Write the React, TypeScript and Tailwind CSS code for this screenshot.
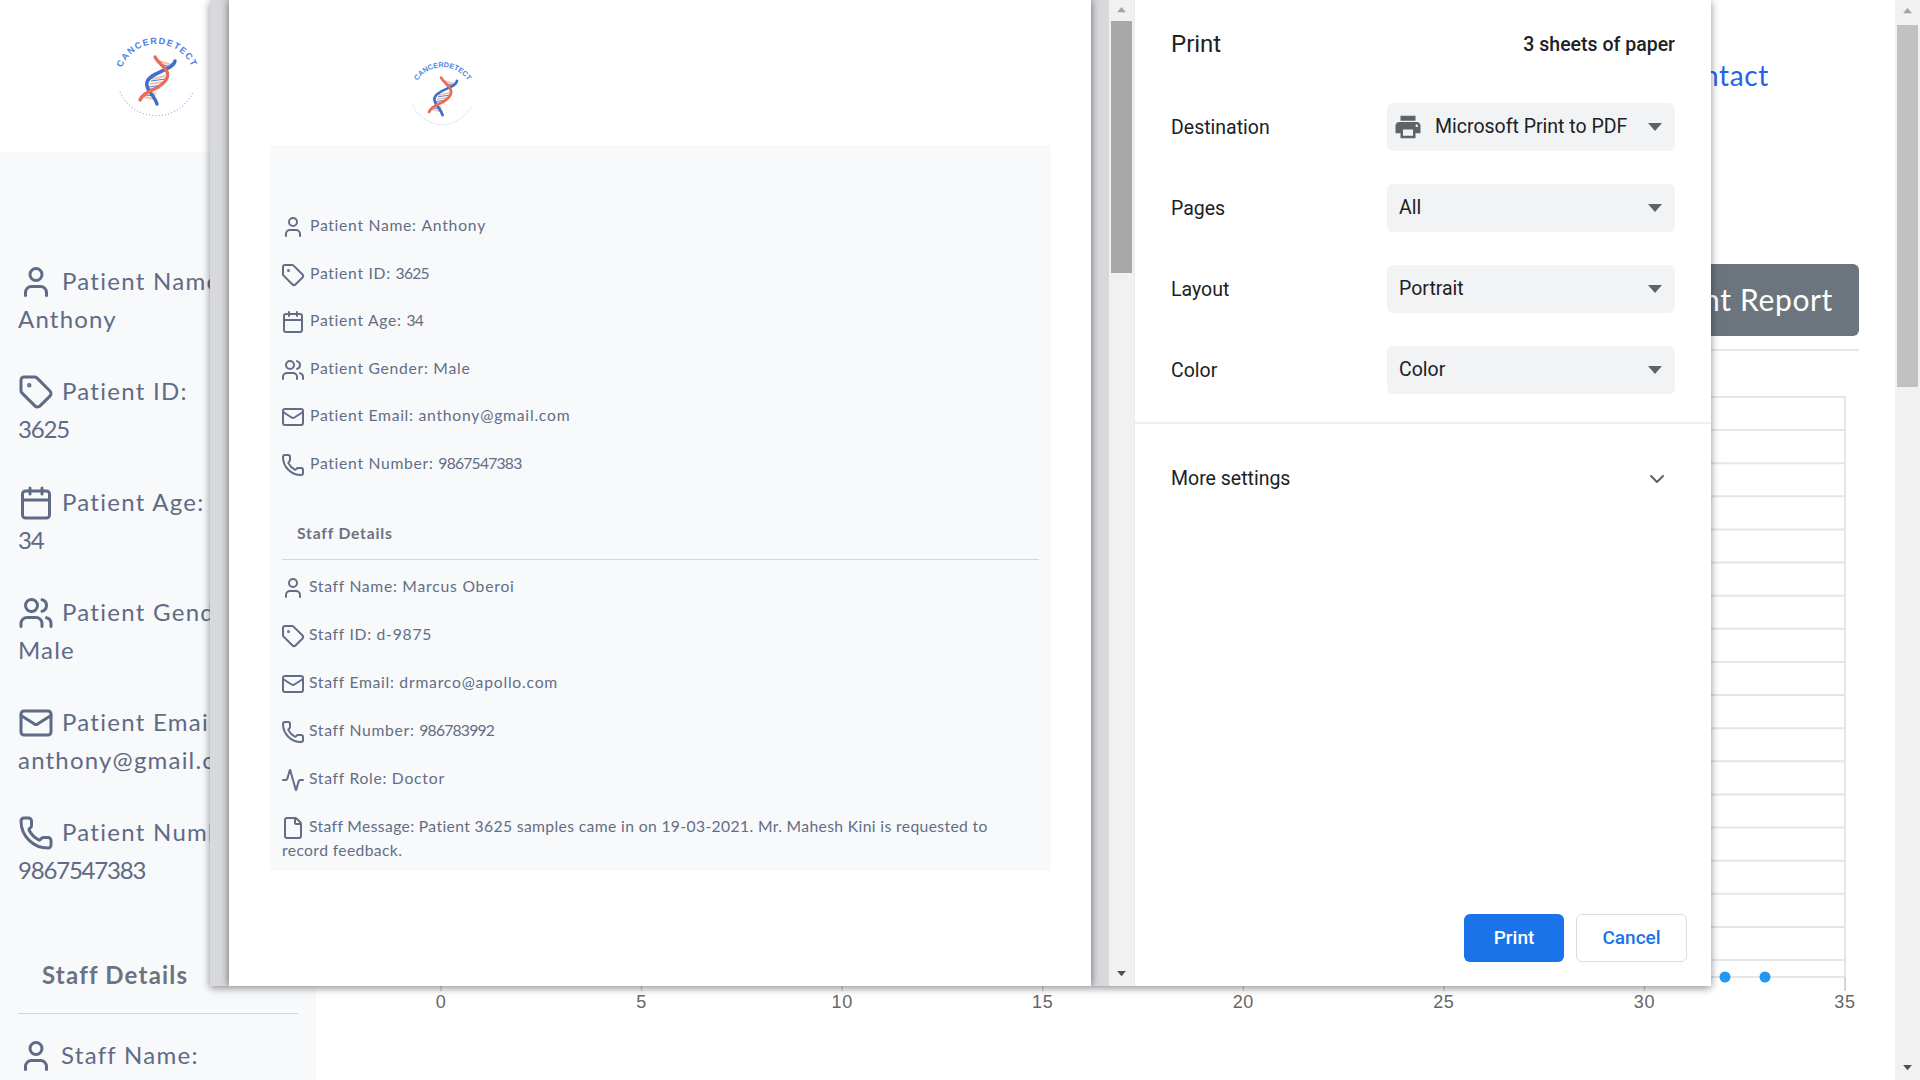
import React from 'react';
import { Activity, Calendar, ChevronDown, File, Mail, Phone, Tag, User, Users } from 'lucide-react';

const patientRows = [
  { icon: User, label: 'Patient Name:', value: 'Anthony' },
  { icon: Tag, label: 'Patient ID:', value: '3625' },
  { icon: Calendar, label: 'Patient Age:', value: '34' },
  { icon: Users, label: 'Patient Gender:', value: 'Male' },
  { icon: Mail, label: 'Patient Email:', value: 'anthony@gmail.com' },
  { icon: Phone, label: 'Patient Number:', value: '9867547383' },
];

const staffRows = [
  { icon: User, label: 'Staff Name:', value: 'Marcus Oberoi' },
  { icon: Tag, label: 'Staff ID:', value: 'd-9875' },
  { icon: Mail, label: 'Staff Email:', value: 'drmarco@apollo.com' },
  { icon: Phone, label: 'Staff Number:', value: '986783992' },
  { icon: Activity, label: 'Staff Role:', value: 'Doctor' },
];

const valueClass = (value: string) => (/^\d+$/.test(value) ? 'tracking-[-0.05em]' : 'tracking-[0.05em]');

const Logo: React.FC<{ id: string; className: string }> = ({ id, className }) => (
  <svg viewBox="0 0 120 110" className={className}>
    <defs>
      <path id={id} d="M 19 62 A 38 38 0 0 1 95 62" />
    </defs>
    <text fill="#4c7fe0" fontSize="9" fontWeight="700" fontFamily="'Liberation Sans',sans-serif">
      <textPath href={`#${id}`} startOffset="50%" textAnchor="middle">CANCERDETECT</textPath>
    </text>
    <path d="M 20 72 A 40 40 0 0 0 93 72" fill="none" stroke="#8fb0f0" strokeWidth="1.2" strokeDasharray="1 2.2" />
    <g stroke="#f2c3a8" strokeWidth="2">
      <path d="M59 41 L72 45 M62 46 L69 49 M52 59 L65 56 M50 64 L64 62 M50 69 L60 68 M44 77 L54 79 M47 72 L56 74" />
    </g>
    <g stroke="#4c7fe0" strokeWidth="1.2">
      <path d="M60 44 L71 47 M51 61 L65 59 M49 67 L62 65 M45 75 L55 76" />
    </g>
    <path d="M75 41 C74 50 50 52 47 62 C45 70 54 74 57 84" fill="none" stroke="#3b6fc9" strokeWidth="3.4" strokeLinecap="round" />
    <path d="M55 37 C60 46 72 50 66 60 C60 70 44 70 40 80" fill="none" stroke="#ea6a5b" strokeWidth="3.4" strokeLinecap="round" />
  </svg>
);

const ScrollArrow: React.FC<{ up?: boolean; className: string }> = ({ up, className }) => (
  <svg viewBox="0 0 12 8" className={className}>
    <path d={up ? 'M6 1 L11 7 L1 7 Z' : 'M6 7 L11 1 L1 1 Z'} fill="currentColor" />
  </svg>
);

const Caret = () => (
  <svg viewBox="0 0 14 8" className="w-[14px] h-[8px] shrink-0">
    <path d="M0 0 L14 0 L7 8 Z" fill="#5f6368" />
  </svg>
);

const Sidebar = () => (
  <aside className="w-[316px] shrink-0 font-['Lato',sans-serif] tracking-[0.08em]">
    <div className="h-[152px] bg-white pl-[100px] pt-[20px]">
      <Logo id="logo-arc-page" className="w-[120px] h-[110px]" />
    </div>
    <div className="bg-[#f8f9fb] h-[928px] px-[18px] pt-[110px] text-[24px] leading-[38px] text-[#5f6b85]">
      {patientRows.map((row) => (
        <div key={row.label} className="mb-[34.3px] whitespace-nowrap">
          <row.icon size={36} strokeWidth={2} className="inline-block align-middle mr-[8px] -mt-[4px]" />
          {row.label}
          <div className={valueClass(row.value)}>{row.value}</div>
        </div>
      ))}
      <div className="pl-[24px] pt-[32px] font-bold tracking-[0.05em] text-[#6b7280]">Staff Details</div>
      <div className="mt-[19px] mb-[22px] border-t border-[#d4d6da]" />
      <div className="whitespace-nowrap">
        <User size={36} strokeWidth={2} className="inline-block align-middle mr-[7px] -mt-[4px]" />
        Staff Name:
      </div>
    </div>
  </aside>
);

const Chart = () => {
  const gridLines = Array.from({ length: 18 }, (_, i) => 17 + i * 33.12);
  const ticks = [0, 5, 10, 15, 20, 25, 30, 35];
  return (
    <svg viewBox="0 0 1579 640" className="w-[1579px] h-[640px] mt-[29px] shrink-0">
      <g stroke="#e6e6e6" strokeWidth="2">
        {gridLines.map((y) => (
          <line key={y} x1="125" x2="1529" y1={y} y2={y} />
        ))}
        <line x1="125" x2="1529" y1="597" y2="597" />
        <line x1="1529" x2="1529" y1="16" y2="611" />
      </g>
      {ticks.map((t) => (
        <g key={t}>
          <line x1={125 + t * 40.115} x2={125 + t * 40.115} y1="597" y2="611" stroke="#d0d0d0" strokeWidth="1.5" />
          <text x={125 + t * 40.115} y="628" textAnchor="middle" fontSize="18" fill="#666666" fontFamily="'Liberation Sans',sans-serif">
            {t}
          </text>
        </g>
      ))}
      <circle cx="1409" cy="597" r="5.5" fill="#2196f3" />
      <circle cx="1449" cy="597" r="5.5" fill="#2196f3" />
    </svg>
  );
};

const MainPage = () => (
  <main className="flex-1 flex flex-col min-w-0 font-['Lato',sans-serif] tracking-[0.04em]">
    <div className="h-[150px] flex items-center justify-end pr-[126px] text-[28px] text-[#2563eb]">Contact</div>
    <div className="pt-[114px] pr-[36px] flex justify-end">
      <button className="h-[72px] px-[26px] pb-[2px] rounded-[6px] bg-[#6c757d] text-white text-[30px]">Patient Report</button>
    </div>
    <div className="mt-[13px] mr-[36px] border-t-2 border-[#e8e8e8]" />
    <Chart />
  </main>
);

const PreviewPage = () => (
  <div className="w-[862px] h-full bg-white shadow-[0_0_8px_rgba(0,0,0,0.55)] pl-[41px] pr-[40px] pt-[48px]">
    <div className="pl-[127px] h-[97px]">
      <Logo id="logo-arc-print" className="w-[96px] h-[88px]" />
    </div>
    <div className="bg-[#f8f9fb] h-[726px] px-[12px] pt-[68px] text-[15.7px] leading-[24px] tracking-[0.045em] text-[#636d85] font-['Lato',sans-serif]">
      {patientRows.map((row) => (
        <div key={row.label} className="mb-[23.5px] whitespace-nowrap">
          <row.icon size={24} strokeWidth={2} className="inline-block align-middle mr-[5px] -ml-[1px] -my-[2px]" />
          {row.label} <span className={valueClass(row.value)}>{row.value}</span>
        </div>
      ))}
      <div className="pl-[15px] pt-[23px] font-bold tracking-[0.05em] text-[#6b7280]">Staff Details</div>
      <div className="mt-[14px] mb-[14px] border-t border-[#d4d6da]" />
      {staffRows.map((row) => (
        <div key={row.label} className="mb-[24px] whitespace-nowrap">
          <row.icon size={24} strokeWidth={2} className="inline-block align-middle mr-[4px] -ml-[1px] -my-[2px]" />
          {row.label} <span className={valueClass(row.value)}>{row.value}</span>
        </div>
      ))}
      <div className="tracking-[0.023em]">
        <File size={24} strokeWidth={2} className="inline-block align-middle mr-[4px] -ml-[1px] -my-[2px]" />
        Staff Message: Patient 3625 samples came in on 19-03-2021. Mr. Mahesh Kini is requested to
        <br />
        record feedback.
      </div>
    </div>
  </div>
);

const SettingRow: React.FC<{ label: string; value: string; printer?: boolean }> = ({ label, value, printer }) => (
  <div className="flex items-center justify-between h-[48px] mb-[33px]">
    <span className="pt-[2px]">{label}</span>
    <div className="w-[288px] h-[48px] rounded-[6px] bg-[#f1f3f4] flex items-center pl-[12px] pr-[13px] text-[#202124]">
      {printer && (
        <svg viewBox="0 0 24 24" className="w-[30px] h-[30px] -ml-[6px] mr-[12px] shrink-0" fill="#5f6368">
          <path d="M19 8H5c-1.66 0-3 1.34-3 3v6h4v4h12v-4h4v-6c0-1.66-1.34-3-3-3zm-3 11H8v-5h8v5zm3-7c-.55 0-1-.45-1-1s.45-1 1-1 1 .45 1 1-.45 1-1 1zm-1-9H6v4h12V3z" />
        </svg>
      )}
      <span className="flex-1">{value}</span>
      <Caret />
    </div>
  </div>
);

const PrintDialog = () => (
  <div className="absolute left-[210px] top-0 w-[1501px] h-[986px] flex bg-white shadow-[0_2px_8px_rgba(0,0,0,0.45)] font-['Roboto',sans-serif]">
    <div className="w-[899px] shrink-0 bg-[#d7d9dd] pl-[19px] pr-[18px] overflow-hidden">
      <PreviewPage />
    </div>
    <div className="w-[25px] shrink-0 bg-[#f1f1f1] flex flex-col items-center text-[#a3a3a3]">
      <ScrollArrow up className="w-[11px] h-[7px] mt-[6px] mb-[8px]" />
      <div className="w-[21px] h-[252px] bg-[#a8a8a8]" />
      <ScrollArrow className="w-[11px] h-[7px] mt-auto mb-[9px] text-[#505050]" />
    </div>
    <div className="flex-1 flex flex-col border-l border-[#e8eaed] text-[19.5px] text-[#202124]">
      <div className="flex justify-between px-[36px] pt-[27px] h-[103px]">
        <span className="text-[24px] leading-[35px]">Print</span>
        <span className="font-medium leading-[36px]">3 sheets of paper</span>
      </div>
      <div className="px-[36px]">
        <SettingRow label="Destination" value="Microsoft Print to PDF" printer />
        <SettingRow label="Pages" value="All" />
        <SettingRow label="Layout" value="Portrait" />
        <SettingRow label="Color" value="Color" />
      </div>
      <div className="border-t-2 border-[#eceef0] -mt-[5px]" />
      <div className="flex items-center justify-between h-[110px] pl-[36px] pr-[42px]">
        <span>More settings</span>
        <ChevronDown size={24} strokeWidth={2} className="text-[#5f6368]" />
      </div>
      <div className="mt-auto mb-[24px] mr-[24px] flex justify-end gap-[12px] font-medium text-[19px]">
        <button className="w-[100px] h-[48px] rounded-[6px] bg-[#1a73e8] text-white">Print</button>
        <button className="w-[111px] h-[48px] rounded-[6px] border border-[#dadce0] text-[#1a73e8]">Cancel</button>
      </div>
    </div>
  </div>
);

export default function App() {
  return (
    <div className="relative h-screen overflow-hidden flex bg-white">
      <Sidebar />
      <MainPage />
      <div className="w-[25px] shrink-0 bg-[#f1f1f1] flex flex-col items-center text-[#505050]">
        <ScrollArrow up className="w-[11px] h-[7px] mt-[7px] mb-[11px] text-[#a3a3a3]" />
        <div className="w-[21px] h-[362px] bg-[#c1c1c1]" />
        <ScrollArrow className="w-[11px] h-[7px] mt-auto mb-[9px]" />
      </div>
      <PrintDialog />
    </div>
  );
}
